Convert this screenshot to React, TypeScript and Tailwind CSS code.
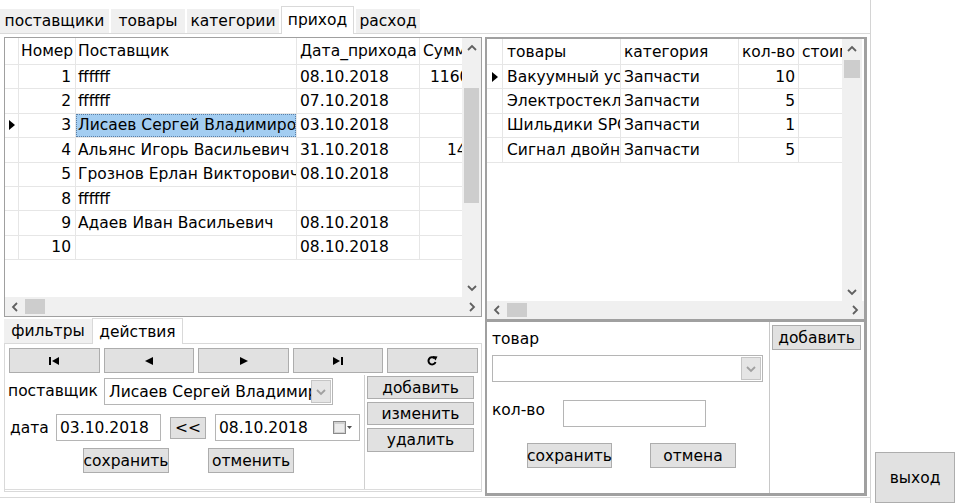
import React from "react";

const FONT = "font-['DejaVu_Sans',sans-serif] text-[15.5px] text-black leading-[18px]";

function TriR({ className = "" }: { className?: string }) {
  return (
    <svg width="6" height="10" viewBox="0 0 6 10" className={className}>
      <polygon points="0,0 6,5 0,10" fill="#000" />
    </svg>
  );
}

function Chevron({ dir, color = "#606060" }: { dir: "u" | "d" | "l" | "r"; color?: string }) {
  const paths: Record<string, string> = {
    u: "M1 6 L5 2 L9 6",
    d: "M1 2 L5 6 L9 2",
    l: "M6 1 L2 5 L6 9",
    r: "M2 1 L6 5 L2 9",
  };
  const vert = dir === "u" || dir === "d";
  return (
    <svg width={vert ? 10 : 8} height={vert ? 8 : 10} viewBox={vert ? "0 0 10 8" : "0 0 8 10"}>
      <path d={paths[dir]} fill="none" stroke={color} strokeWidth="1.8" />
    </svg>
  );
}

function VScroll({ thumbTop, thumbH, w }: { thumbTop: number; thumbH: number; w: string }) {
  return (
    <div className={`${w} h-full bg-[#f0f0f0] relative flex flex-col items-center`}>
      <div className="h-[19px] flex items-center justify-center">
        <Chevron dir="u" />
      </div>
      <div className="flex-1" />
      <div className="h-[19px] flex items-center justify-center">
        <Chevron dir="d" />
      </div>
      <div
        className="absolute left-[2px] right-[2px] bg-[#cdcdcd]"
        style={{ top: thumbTop, height: thumbH }}
      />
    </div>
  );
}

function HScroll({ thumbLeft, h }: { thumbLeft: number; h: string }) {
  return (
    <div className={`${h} flex`}>
      <div className="flex-1 bg-[#f0f0f0] relative flex items-center">
        <div className="w-[19px] flex items-center justify-center">
          <Chevron dir="l" />
        </div>
        <div className="flex-1" />
        <div className="w-[19px] flex items-center justify-center">
          <Chevron dir="r" />
        </div>
        <div className="absolute top-[2px] bottom-[2px] w-[20px] bg-[#cdcdcd]" style={{ left: thumbLeft }} />
      </div>
    </div>
  );
}

function Combo({ w, value }: { w: string; value?: string }) {
  return (
    <div className={`${w} h-[27px] border border-[#b5b5b5] bg-white flex items-center`}>
      <div className="flex-1 overflow-hidden whitespace-nowrap pl-[4px]">{value}</div>
      <div className="w-[20px] h-[23px] mr-[1px] bg-[#e5e5e5] border border-[#c5c5c5] flex items-center justify-center">
        <Chevron dir="d" color="#a0a0a0" />
      </div>
    </div>
  );
}

function Btn({ className, children }: { className: string; children: React.ReactNode }) {
  return (
    <div className={`${className} bg-[#e1e1e1] border border-[#adadad] flex items-center justify-center whitespace-nowrap`}>
      {children}
    </div>
  );
}

const leftRows: [string, string, string, string, boolean][] = [
  ["1", "ffffff", "08.10.2018", "11600", false],
  ["2", "ffffff", "07.10.2018", "", false],
  ["3", "Лисаев Сергей Владимирович", "03.10.2018", "", true],
  ["4", "Альянс Игорь Васильевич", "31.10.2018", "1400", false],
  ["5", "Грознов Ерлан Викторович", "08.10.2018", "", false],
  ["8", "ffffff", "", "", false],
  ["9", "Адаев Иван Васильевич", "08.10.2018", "", false],
  ["10", "", "08.10.2018", "", false],
];

const rightRows: [string, string, string, boolean][] = [
  ["Вакуумный усилитель", "Запчасти", "10", true],
  ["Электростеклоподъемник", "Запчасти", "5", false],
  ["Шильдики SPORT", "Запчасти", "1", false],
  ["Сигнал двойной", "Запчасти", "5", false],
];

function LeftGrid() {
  return (
    <div className="h-[280px] border border-[#a0a0a0] bg-white flex flex-col">
      <div className="flex h-[259px]">
        <div className="w-[457px] overflow-hidden">
          <div className="w-[520px]">
            <div className="flex h-[27px] border-b border-[#e6e6e6]">
              <div className="w-[14px] border-r border-[#e6e6e6]" />
              <div className="w-[57px] border-r border-[#e6e6e6] pl-[2px] flex items-center overflow-hidden whitespace-nowrap">Номер</div>
              <div className="w-[221px] border-r border-[#e6e6e6] pl-[2px] flex items-center">Поставщик</div>
              <div className="w-[123px] border-r border-[#e6e6e6] pl-[3px] flex items-center overflow-hidden whitespace-nowrap">Дата_прихода</div>
              <div className="w-[90px] pl-[3px] flex items-center">Сумма</div>
            </div>
            {leftRows.map(([n, name, date, sum, sel], i) => (
              <div key={i} className="flex h-[24.4px] border-b border-[#e6e6e6]">
                <div className="w-[14px] border-r border-[#e6e6e6] flex items-center justify-center">
                  {sel && <TriR />}
                </div>
                <div className="w-[57px] border-r border-[#e6e6e6] pr-[4px] flex items-center justify-end">{n}</div>
                <div className="w-[221px] border-r border-[#e6e6e6] flex items-center overflow-hidden">
                  <div
                    className={
                      sel
                        ? "w-full h-full bg-[#a3cdf1] border border-dotted border-[#5a7fa6] pl-[1px] flex items-center overflow-hidden whitespace-nowrap"
                        : "w-full pl-[2px] overflow-hidden whitespace-nowrap"
                    }
                  >
                    {name}
                  </div>
                </div>
                <div className="w-[123px] border-r border-[#e6e6e6] pl-[3px] flex items-center">{date}</div>
                <div className={sum.length > 4 ? "w-[90px] pl-[10px] flex items-center" : "w-[90px] pl-[27px] flex items-center"}>{sum}</div>
              </div>
            ))}
          </div>
        </div>
        <VScroll w="w-[19px]" thumbTop={50} thumbH={115} />
      </div>
      <HScroll h="h-[19px]" thumbLeft={20} />
    </div>
  );
}

function RightGrid() {
  return (
    <div className="h-[283px] border-b-[3px] border-[#a0a0a0] flex flex-col bg-white">
      <div className="flex h-[262px]">
        <div className="w-[355px] overflow-hidden">
          <div className="w-[450px]">
            <div className="flex h-[26px] border-b border-[#e6e6e6]">
              <div className="w-[16px] border-r border-[#e6e6e6]" />
              <div className="w-[118px] border-r border-[#e6e6e6] pl-[4px] flex items-center">товары</div>
              <div className="w-[118px] border-r border-[#e6e6e6] pl-[3px] flex items-center">категория</div>
              <div className="w-[60px] border-r border-[#e6e6e6] pl-[3px] flex items-center overflow-hidden whitespace-nowrap">кол-во</div>
              <div className="w-[90px] pl-[3px] flex items-center">стоимость</div>
            </div>
            {rightRows.map(([t, c, q, sel], i) => (
              <div key={i} className="flex h-[24.4px] border-b border-[#e6e6e6]">
                <div className="w-[16px] border-r border-[#e6e6e6] flex items-center justify-center">
                  {sel && <TriR />}
                </div>
                <div className="w-[118px] border-r border-[#e6e6e6] pl-[4px] flex items-center overflow-hidden whitespace-nowrap">{t}</div>
                <div className="w-[118px] border-r border-[#e6e6e6] pl-[3px] flex items-center">{c}</div>
                <div className="w-[60px] border-r border-[#e6e6e6] pr-[3px] flex items-center justify-end">{q}</div>
                <div className="w-[90px]" />
              </div>
            ))}
          </div>
        </div>
        <VScroll w="w-[20px]" thumbTop={21} thumbH={18} />
      </div>
      <HScroll h="h-[18px]" thumbLeft={20} />
    </div>
  );
}

function NavIcon({ kind }: { kind: "first" | "prior" | "next" | "last" | "refresh" }) {
  if (kind === "first")
    return (
      <svg width="11" height="8" viewBox="0 0 11 8">
        <rect x="0" y="0" width="2" height="8" fill="#000" />
        <polygon points="10,0 3,4 10,8" fill="#000" />
      </svg>
    );
  if (kind === "prior")
    return (
      <svg width="8" height="8" viewBox="0 0 8 8">
        <polygon points="8,0 0,4 8,8" fill="#000" />
      </svg>
    );
  if (kind === "next")
    return (
      <svg width="8" height="8" viewBox="0 0 8 8">
        <polygon points="0,0 8,4 0,8" fill="#000" />
      </svg>
    );
  if (kind === "last")
    return (
      <svg width="11" height="8" viewBox="0 0 11 8">
        <polygon points="0,0 7,4 0,8" fill="#000" />
        <rect x="8" y="0" width="2" height="8" fill="#000" />
      </svg>
    );
  return (
    <svg width="11" height="10" viewBox="0 0 11 10">
      <path d="M8.5 6 A3.6 3.6 0 1 1 7.5 2.2" fill="none" stroke="#000" strokeWidth="2" />
      <polygon points="5.5,0 10.5,0.5 8.5,4.5" fill="#000" />
    </svg>
  );
}

function CalIcon() {
  return (
    <svg width="20" height="14" viewBox="0 0 20 14">
      <rect x="0.5" y="0.5" width="12" height="12" fill="#d0d0d0" stroke="#8a8a8a" />
      <rect x="2" y="3" width="9" height="8" fill="#ececec" />
      <polygon points="14,5 19,5 16.5,8" fill="#505050" />
    </svg>
  );
}

function LeftBottom() {
  return (
    <div className="flex flex-col">
      <div className="h-[26px] flex items-end">
        <div className="h-[24px] w-[88px] bg-[#f0f0f0] flex items-center justify-center">фильтры</div>
        <div className="h-[26px] w-[91px] bg-white border-t border-l border-r border-[#d9d9d9] flex items-center justify-center -mb-[1px] relative">
          действия
        </div>
      </div>
      <div className="h-[149px] border border-[#d9d9d9] bg-white flex flex-col">
        <div className="flex gap-[4px] pl-[4px] pt-[4px]">
          <Btn className="w-[91px] h-[25px]"><NavIcon kind="first" /></Btn>
          <Btn className="w-[90px] h-[25px]"><NavIcon kind="prior" /></Btn>
          <Btn className="w-[91px] h-[25px]"><NavIcon kind="next" /></Btn>
          <Btn className="w-[90px] h-[25px]"><NavIcon kind="last" /></Btn>
          <Btn className="w-[91px] h-[25px]"><NavIcon kind="refresh" /></Btn>
        </div>
        <div className="flex flex-1 mt-[2px] border-b border-[#dcdcdc] mb-[1px]">
          <div className="w-[360px] border-r border-[#d0d0d0] flex flex-col">
            <div className="flex items-center h-[27px] mt-[3px]">
              <div className="w-[99px] pl-[3px] -mt-[2px] whitespace-nowrap">поставщик</div>
              <Combo w="w-[229px]" value="Лисаев Сергей Владимирович" />
            </div>
            <div className="flex items-center h-[27px] mt-[9px]">
              <div className="w-[51px] pl-[5px]">дата</div>
              <div className="w-[105px] h-[27px] border border-[#b5b5b5] flex items-center pl-[3px] whitespace-nowrap">03.10.2018</div>
              <Btn className="ml-[9px] w-[36px] h-[22px]">&lt;&lt;</Btn>
              <div className="ml-[9px] w-[145px] h-[27px] border border-[#b5b5b5] flex items-center pl-[3px] justify-between pr-[6px]">
                <span>08.10.2018</span>
                <CalIcon />
              </div>
            </div>
            <div className="flex h-[25px] mt-[7px]">
              <Btn className="ml-[78px] w-[86px] h-[25px]">сохранить</Btn>
              <Btn className="ml-[39px] w-[86px] h-[25px]">отменить</Btn>
            </div>
          </div>
          <div className="flex flex-col gap-[3px] pl-[2px] pt-[1px]">
            <Btn className="w-[107px] h-[23px]">добавить</Btn>
            <Btn className="w-[107px] h-[23px]">изменить</Btn>
            <Btn className="w-[107px] h-[24px]">удалить</Btn>
          </div>
        </div>
      </div>
    </div>
  );
}

function RightBottom() {
  return (
    <div className="flex flex-1">
      <div className="w-[283px] border-r border-[#c8c8c8] flex flex-col pl-[5px]">
        <div className="mt-[8px]">товар</div>
        <div className="mt-[7px]">
          <Combo w="w-[271px]" />
        </div>
        <div className="flex items-center mt-[18px] h-[27px]">
          <div className="w-[71px] -mt-[7px]">кол-во</div>
          <div className="w-[143px] h-[27px] border border-[#b5b5b5] bg-white" />
        </div>
        <div className="flex mt-[16px]">
          <Btn className="ml-[35px] w-[85px] h-[25px]">сохранить</Btn>
          <Btn className="ml-[38px] w-[86px] h-[25px]">отмена</Btn>
        </div>
      </div>
      <div className="pl-[2px] pt-[3px]">
        <Btn className="w-[89px] h-[25px]">добавить</Btn>
      </div>
    </div>
  );
}

export default function App() {
  const tabs = ["поставщики", "товары", "категории", "приход", "расход"];
  const widths = ["w-[109px]", "w-[74px]", "w-[92px]", "w-[73px]", "w-[64px]"];
  return (
    <div className={`w-[955px] h-[503px] bg-white flex overflow-hidden ${FONT}`}>
      <div className="w-[872px] h-[503px] border-r border-[#d4d4d4] flex flex-col">
        <div className="h-[33px] flex items-end gap-[2px]">
          {tabs.map((t, i) =>
            i === 3 ? (
              <div
                key={t}
                className={`${widths[i]} h-[28px] bg-white border-t border-l border-r border-[#d9d9d9] flex items-center justify-center -mb-[1px] relative pb-[2px]`}
              >
                {t}
              </div>
            ) : (
              <div key={t} className={`${widths[i]} h-[24px] bg-[#f0f0f0] flex items-center justify-center whitespace-nowrap`}>
                {t}
              </div>
            )
          )}
        </div>
        <div className="h-[465px] border-t border-b border-[#d9d9d9] flex pt-[3px] pl-[4px]">
          <div className="w-[478px] flex flex-col">
            <LeftGrid />
            <LeftBottom />
          </div>
          <div className="ml-[3px] w-[382px] h-[459px] border-l-2 border-t-2 border-r-[3px] border-b-[3px] border-[#a0a0a0] flex flex-col">
            <RightGrid />
            <RightBottom />
          </div>
        </div>
      </div>
      <div className="flex-1 flex flex-col justify-end">
        <Btn className="ml-[4px] w-[80px] h-[51px]">выход</Btn>
      </div>
    </div>
  );
}
